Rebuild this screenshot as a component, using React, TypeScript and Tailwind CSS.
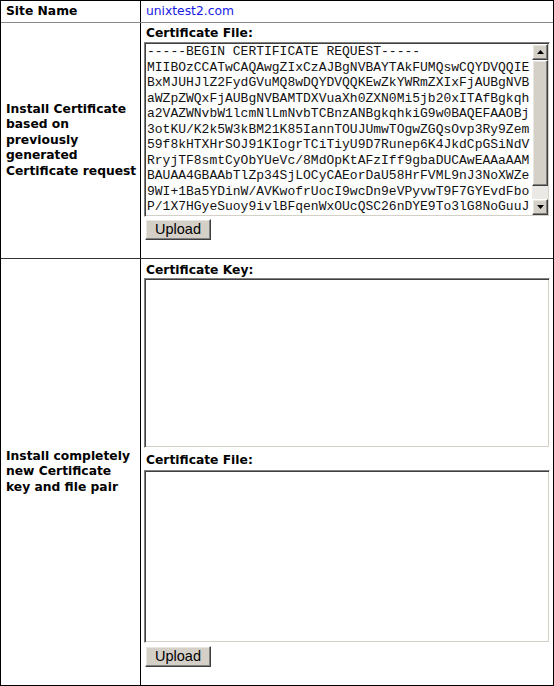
import React from "react";

const CSR_LINES = [
  "-----BEGIN CERTIFICATE REQUEST-----",
  "MIIBOzCCATwCAQAwgZIxCzAJBgNVBAYTAkFUMQswCQYDVQQIE",
  "BxMJUHJlZ2FydGVuMQ8wDQYDVQQKEwZkYWRmZXIxFjAUBgNVB",
  "aWZpZWQxFjAUBgNVBAMTDXVuaXh0ZXN0Mi5jb20xITAfBgkqh",
  "a2VAZWNvbW1lcmNlLmNvbTCBnzANBgkqhkiG9w0BAQEFAAOBj",
  "3otKU/K2k5W3kBM21K85IannTOUJUmwTOgwZGQsOvp3Ry9Zem",
  "59f8kHTXHrSOJ91KIogrTCiTiyU9D7Runep6K4JkdCpGSiNdV",
  "RryjTF8smtCyObYUeVc/8MdOpKtAFzIff9gbaDUCAwEAAaAAM",
  "BAUAA4GBAAbTlZp34SjLOCyCAEorDaU58HrFVML9nJ3NoXWZe",
  "9WI+1Ba5YDinW/AVKwofrUocI9wcDn9eVPyvwT9F7GYEvdFbo",
  "P/1X7HGyeSuoy9ivlBFqenWxOUcQSC26nDYE9To3lG8NoGuuJ",
];

const insetBox =
  "border border-t-[#808080] border-l-[#808080] border-b-white border-r-white shadow-[inset_1px_1px_#404040,inset_-1px_-1px_#d4d0c8] bg-white";

const outsetBox =
  "border border-t-white border-l-white border-b-[#404040] border-r-[#404040] shadow-[inset_-1px_-1px_#808080,inset_1px_1px_#e8e6e0] bg-[#d4d0c8]";

const Arrow = ({ down }: { down?: boolean }) => (
  <div className={`${outsetBox} flex h-[16px] w-[16px] items-center justify-center`}>
    <svg width="7" height="4" viewBox="0 0 7 4">
      {down ? <polygon points="0,0 7,0 3.5,4" fill="#000" /> : <polygon points="3.5,0 7,4 0,4" fill="#000" />}
    </svg>
  </div>
);

const FakeTextArea = ({ height, lines }: { height: string; lines?: string[] }) => (
  <div className={`${insetBox} ${height} flex w-[406px] p-[1px]`}>
    <div className="flex-1 overflow-hidden whitespace-pre pl-[1px] font-['Liberation_Mono',monospace] text-[13px] leading-[15.5px] text-[#111]">
      {lines?.map((l, i) => (
        <div key={i}>{l}</div>
      ))}
    </div>
    {lines && (
      <div className="flex w-[16px] flex-col">
        <Arrow />
        <div className={`${outsetBox} h-[126px]`} />
        <div className="flex-1 bg-[#ebe9e5]" />
        <Arrow down />
      </div>
    )}
  </div>
);

const UploadButton = ({ className }: { className: string }) => (
  <button
    type="button"
    className={`${outsetBox} ${className} ml-[1px] h-[21px] w-[66px] font-['Liberation_Sans',Arial,sans-serif] text-[14.5px] leading-none text-black`}
  >
    Upload
  </button>
);

const Label = ({ text, className = "" }: { text: string; className?: string }) => (
  <div className={`pl-[2px] font-bold leading-[16px] ${className}`}>{text}</div>
);

export default function App() {
  return (
    <div className="w-[554px] border border-black bg-white font-['DejaVu_Sans',Verdana,sans-serif] text-[12.3px] text-black">
      <div className="flex h-[22px] border-b border-[#8a8a8a]">
        <div className="flex w-[140px] items-center border-r border-black pl-[5px] font-bold">Site Name</div>
        <div className="flex flex-1 items-center pl-[5px] text-[#1a1ae6]">unixtest2.com</div>
      </div>

      <div className="flex h-[236px] border-b border-[#333]">
        <div className="flex w-[140px] items-center border-r border-black pl-[5px] font-bold leading-[15.5px]">
          <div>
            Install Certificate
            <br />
            based on
            <br />
            previously
            <br />
            generated
            <br />
            Certificate request
          </div>
        </div>
        <div className="flex flex-1 flex-col items-start pl-[3px] pt-[2px]">
          <Label text="Certificate File:" />
          <FakeTextArea height="h-[175px] mt-[1px]" lines={CSR_LINES} />
          <UploadButton className="mt-[2px]" />
        </div>
      </div>

      <div className="flex h-[426px]">
        <div className="flex w-[140px] items-center border-r border-black pl-[5px] font-bold leading-[15.5px]">
          <div>
            Install completely
            <br />
            new Certificate
            <br />
            key and file pair
          </div>
        </div>
        <div className="flex flex-1 flex-col items-start pl-[3px] pt-[3px]">
          <Label text="Certificate Key:" />
          <FakeTextArea height="h-[170px]" />
          <Label text="Certificate File:" className="mt-[4px]" />
          <FakeTextArea height="h-[173px] mt-[2px]" />
          <UploadButton className="mt-[3px]" />
        </div>
      </div>
    </div>
  );
}
